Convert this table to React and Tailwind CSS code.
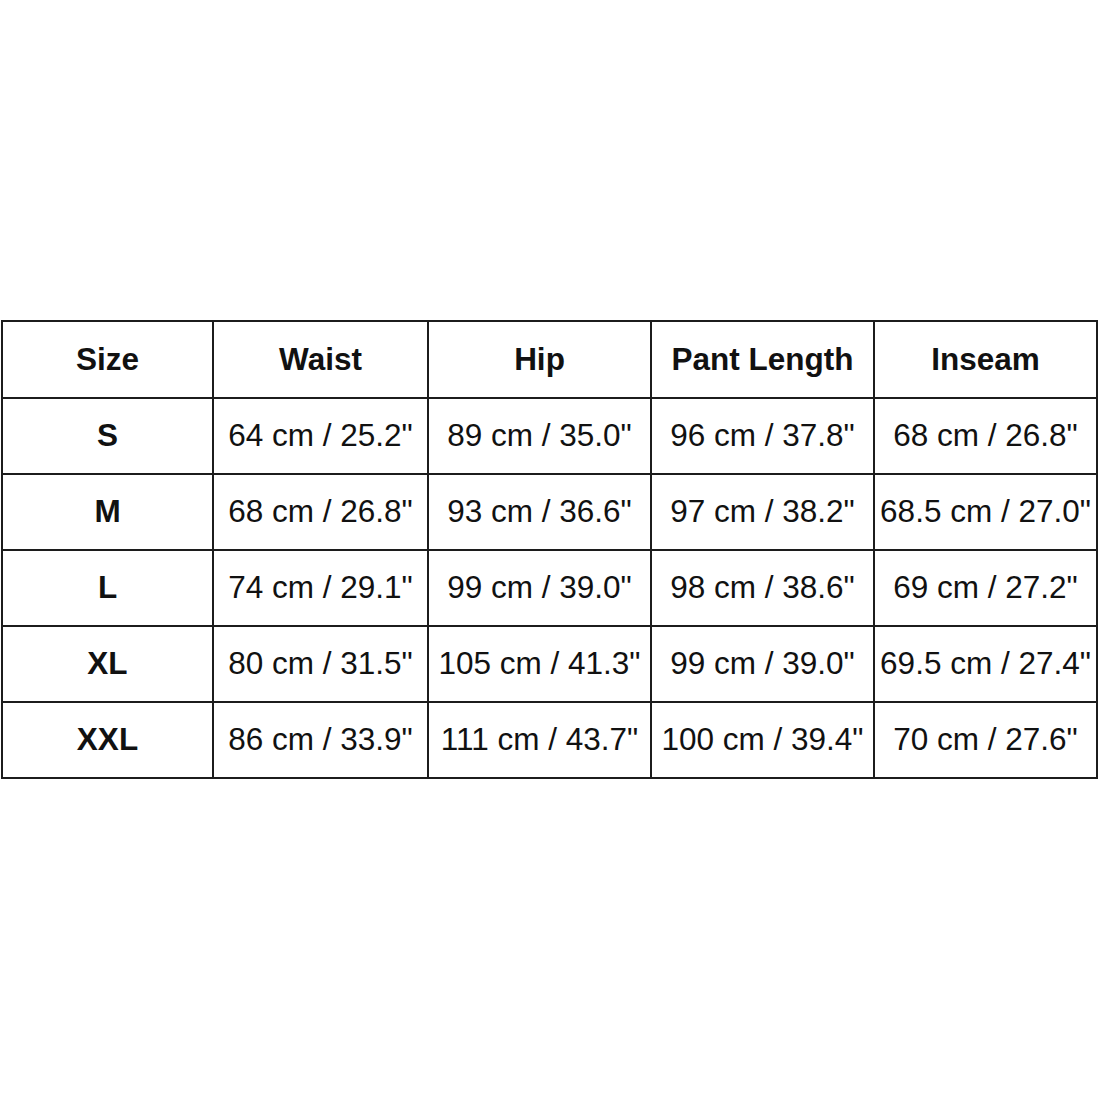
import React from "react";

const header = ["Size", "Waist", "Hip", "Pant Length", "Inseam"];
const rows = [
  ["S", '64 cm / 25.2"', '89 cm / 35.0"', '96 cm / 37.8"', '68 cm / 26.8"'],
  ["M", '68 cm / 26.8"', '93 cm / 36.6"', '97 cm / 38.2"', '68.5 cm / 27.0"'],
  ["L", '74 cm / 29.1"', '99 cm / 39.0"', '98 cm / 38.6"', '69 cm / 27.2"'],
  ["XL", '80 cm / 31.5"', '105 cm / 41.3"', '99 cm / 39.0"', '69.5 cm / 27.4"'],
  ["XXL", '86 cm / 33.9"', '111 cm / 43.7"', '100 cm / 39.4"', '70 cm / 27.6"'],
];

export default function App() {
  return (
    <div className="w-[1100px] h-[1100px] bg-white pt-[320px] pl-px">
      <div
        className="grid grid-cols-[211px_215px_223px_223px_223px] w-[1097px] border-l-2 border-t-2 border-[#1c1c1c] text-[#111] text-[31.5px] leading-none"
        style={{ fontFamily: '"Liberation Sans", Arial, sans-serif' }}
      >
        {header.map((h) => (
          <div
            key={h}
            className="h-[77px] flex items-center justify-center border-r-2 border-b-2 border-[#1c1c1c] font-bold whitespace-nowrap"
          >
            {h}
          </div>
        ))}
        {rows.map((r) =>
          r.map((c, i) => (
            <div
              key={r[0] + i}
              className={
                i === 0
                  ? "h-[76px] flex items-center justify-center border-r-2 border-b-2 border-[#1c1c1c] font-bold whitespace-nowrap"
                  : "h-[76px] flex items-center justify-center border-r-2 border-b-2 border-[#1c1c1c] whitespace-nowrap"
              }
            >
              {c}
            </div>
          ))
        )}
      </div>
    </div>
  );
}
